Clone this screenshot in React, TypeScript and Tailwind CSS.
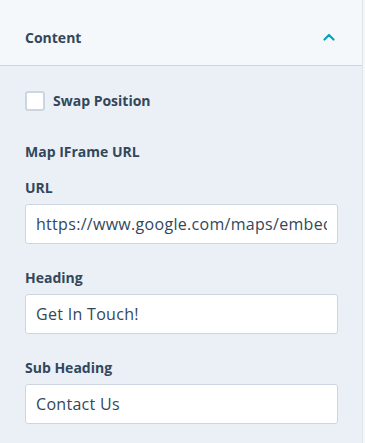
import { useState } from "react";

const font = { fontFamily: '"Open Sans", "Noto Sans", sans-serif' };

function Field({ label, value }: { label: string; value: string }) {
  return (
    <div className="flex flex-col">
      <label className="text-[14px] leading-[20px] font-bold text-[#33475b] mb-[6px]">{label}</label>
      <input
        defaultValue={value}
        className="h-[40px] w-full rounded-[3px] border border-[#cbd6e2] bg-white px-[10px] text-[16px] tracking-[0.3px] text-[#33475b] outline-none"
        style={font}
      />
    </div>
  );
}

export default function App() {
  const [checked, setChecked] = useState(false);

  return (
    <div className="w-[365px] h-[443px] flex overflow-hidden" style={font}>
      <div className="w-[363px] flex flex-col border-r border-[#dfe3eb] bg-[#eaf0f6]">
        <div className="h-[66px] shrink-0 flex items-center justify-between pl-[25px] pr-[27px] pt-[9px] bg-[#f5f8fa] border-b border-[#cbd6e2]">
          <span className="text-[14px] font-bold text-[#33475b]">Content</span>
          <svg width="12" height="8" viewBox="0 0 12 8" fill="none">
            <path d="M1.5 6.5L6 2L10.5 6.5" stroke="#00a4bd" strokeWidth="2.2" strokeLinecap="round" strokeLinejoin="round" />
          </svg>
        </div>

        <div className="flex flex-col pl-[25px] pr-[24px] pt-[25px]">
          <label className="flex items-center gap-[8px] cursor-pointer">
            <span
              onClick={() => setChecked(!checked)}
              className="w-[20px] h-[20px] rounded-[3px] border-2 border-[#cbd6e2] bg-white flex items-center justify-center"
            >
              {checked && (
                <svg width="12" height="10" viewBox="0 0 12 10">
                  <path d="M1 5l3.5 3.5L11 1" stroke="#33475b" strokeWidth="2" fill="none" />
                </svg>
              )}
            </span>
            <span className="text-[14px] leading-[20px] font-bold text-[#33475b]">Swap Position</span>
          </label>

          <div className="mt-[31px] text-[14px] leading-[20px] font-bold text-[#33475b]">Map IFrame URL</div>

          <div className="mt-[16px] flex flex-col gap-[24px]">
            <Field label="URL" value="https://www.google.com/maps/embed?pb=!1m18!1m12" />
            <Field label="Heading" value="Get In Touch!" />
            <Field label="Sub Heading" value="Contact Us" />
          </div>
        </div>
      </div>
      <div className="flex-1 bg-[#f5f8fa]" />
    </div>
  );
}
